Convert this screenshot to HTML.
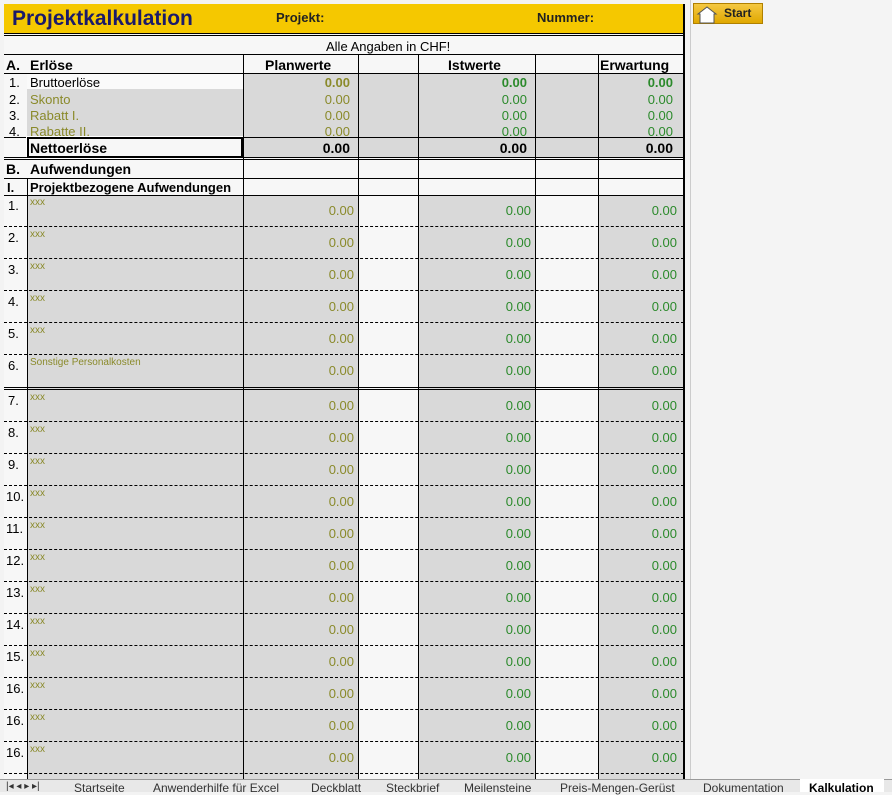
<!DOCTYPE html><html><head><meta charset="utf-8"><style>
body{margin:0;width:892px;height:792px;background:#f3f3f3;position:relative;overflow:hidden;font-family:"Liberation Sans",sans-serif;}
div,span{position:absolute;box-sizing:border-box}
.s{background:#d9d9d9}
.w{background:#f7f7f7}
.vl{width:1px;background:#000}
.hl{height:1px;background:#000;left:4px;width:680px}
.r{left:4px;width:680px;height:32px;border-bottom:1px dashed #000}
.r .n{left:4px;top:3px;font-size:13px;color:#000}
.r .x{left:26px;top:2px;font-size:10px;color:#8a8a2a}
.v{font-size:13px;text-align:right}
.r .v{top:8px}
.p{left:240px;width:110px;color:#8a8a2a}
.i{left:414px;width:113px;color:#2b8a2b}
.e{left:594px;width:79px;color:#2b8a2b}
.top .n{left:6px;font-size:13px}
.lab{left:30px;font-size:13px}
.tab{top:781px;font-size:12px;color:#333}
</style></head><body>
<!-- right pane -->
<div style="left:690px;top:0;width:202px;height:780px;background:#f4f4f4;border-left:1px solid #ccc"></div>
<div style="left:693px;top:3px;width:70px;height:21px;background:linear-gradient(#f5c842,#e0a800);border:1px solid #b08000;font-size:12px;font-weight:bold;color:#222;padding:2px 0 0 30px">Start</div>
<svg style="position:absolute;left:696px;top:4px" width="22" height="20"><path d="M2 10 L11 3 L20 10 L18 10 L18 19 L4 19 L4 10 Z" fill="#fff" stroke="#555" stroke-width="1"/></svg>
<!-- sheet -->
<div style="left:4px;top:4px;width:680px;height:776px;background:#f7f7f7"></div>
<div style="left:4px;top:4px;width:680px;height:29px;background:#f5c800"></div>
<div style="left:12px;top:7px;font-size:21px;font-weight:bold;color:#1a1a6a">Projektkalkulation</div>
<div style="left:276px;top:10px;font-size:13px;font-weight:bold;color:#222">Projekt:</div>
<div style="left:537px;top:10px;font-size:13px;font-weight:bold;color:#222">Nummer:</div>
<div class="hl" style="top:33px;height:1px"></div><div class="hl" style="top:35px"></div>
<div style="left:326px;top:39px;font-size:13px">Alle Angaben in CHF!</div>
<div class="hl" style="top:54px"></div>
<!-- gray blocks for Erlöse -->
<div class="w" style="left:27px;top:73px;width:216px;height:16px;background:#fafafa"></div>
<div class="s" style="left:27px;top:89px;width:216px;height:48px"></div>
<div class="s" style="left:243px;top:73px;width:440px;height:84px"></div>
<div style="left:6px;top:57px;font-size:14px;font-weight:bold">A.</div>
<div class="lab" style="top:57px;font-size:14px;font-weight:bold">Erlöse</div>
<div style="left:265px;top:57px;font-size:14px;font-weight:bold">Planwerte</div>
<div style="left:448px;top:57px;font-size:14px;font-weight:bold">Istwerte</div>
<div style="left:600px;top:57px;font-size:14px;font-weight:bold">Erwartung</div>
<div class="hl" style="top:73px"></div>
<div style="left:9px;top:75px;font-size:13px">1.</div><div class="lab" style="top:75px">Bruttoerlöse</div>
<div style="left:9px;top:92px;font-size:13px">2.</div><div class="lab" style="top:92px;color:#8a8a2a">Skonto</div>
<div style="left:9px;top:108px;font-size:13px">3.</div><div class="lab" style="top:108px;color:#8a8a2a">Rabatt I.</div>
<div style="left:9px;top:124px;font-size:13px">4.</div><div class="lab" style="top:124px;color:#8a8a2a">Rabatte II.</div>
<div class="v p" style="top:75px;font-weight:bold">0.00</div><div class="v i" style="top:75px;font-weight:bold">0.00</div><div class="v e" style="top:75px;font-weight:bold">0.00</div>
<div class="v p" style="top:92px">0.00</div><div class="v i" style="top:92px">0.00</div><div class="v e" style="top:92px">0.00</div>
<div class="v p" style="top:108px">0.00</div><div class="v i" style="top:108px">0.00</div><div class="v e" style="top:108px">0.00</div>
<div class="v p" style="top:124px">0.00</div><div class="v i" style="top:124px">0.00</div><div class="v e" style="top:124px">0.00</div>
<div class="hl" style="top:137px"></div>
<div style="left:27px;top:137px;width:216px;height:21px;border:2px solid #000;outline:1px solid #fff;background:#f7f7f7"></div>
<div class="lab" style="top:140px;font-size:14px;font-weight:bold">Nettoerlöse</div>
<div class="v p" style="top:140px;font-size:14px;font-weight:bold;color:#000">0.00</div>
<div class="v i" style="top:140px;font-size:14px;font-weight:bold;color:#000">0.00</div>
<div class="v e" style="top:140px;font-size:14px;font-weight:bold;color:#000">0.00</div>
<div class="hl" style="top:157px"></div><div class="hl" style="top:159px"></div>
<div style="left:6px;top:161px;font-size:14px;font-weight:bold">B.</div><div class="lab" style="top:161px;font-size:14px;font-weight:bold">Aufwendungen</div>
<div class="hl" style="top:178px"></div>
<div style="left:7px;top:180px;font-size:13px;font-weight:bold">I.</div><div class="lab" style="top:180px;font-weight:bold">Projektbezogene Aufwendungen</div>
<div class="hl" style="top:195px"></div>
<!-- data strips -->
<div class="s" style="left:27px;top:196px;width:216px;height:584px"></div>
<div class="s" style="left:243px;top:196px;width:115px;height:584px"></div>
<div class="s" style="left:418px;top:196px;width:117px;height:584px"></div>
<div class="s" style="left:598px;top:196px;width:85px;height:584px"></div>
<div class="r" style="top:195px"><span class="n">1.</span><span class="x">xxx</span><span class="v p">0.00</span><span class="v i">0.00</span><span class="v e">0.00</span></div>
<div class="r" style="top:227px"><span class="n">2.</span><span class="x">xxx</span><span class="v p">0.00</span><span class="v i">0.00</span><span class="v e">0.00</span></div>
<div class="r" style="top:259px"><span class="n">3.</span><span class="x">xxx</span><span class="v p">0.00</span><span class="v i">0.00</span><span class="v e">0.00</span></div>
<div class="r" style="top:291px"><span class="n">4.</span><span class="x">xxx</span><span class="v p">0.00</span><span class="v i">0.00</span><span class="v e">0.00</span></div>
<div class="r" style="top:323px"><span class="n">5.</span><span class="x">xxx</span><span class="v p">0.00</span><span class="v i">0.00</span><span class="v e">0.00</span></div>
<div class="r" style="top:355px;border-bottom:none"><span class="n">6.</span><span class="x">Sonstige Personalkosten</span><span class="v p">0.00</span><span class="v i">0.00</span><span class="v e">0.00</span></div>
<div class="hl" style="top:387px"></div><div class="hl" style="top:389px"></div>
<div class="r" style="top:390px"><span class="n">7.</span><span class="x">xxx</span><span class="v p">0.00</span><span class="v i">0.00</span><span class="v e">0.00</span></div>
<div class="r" style="top:422px"><span class="n">8.</span><span class="x">xxx</span><span class="v p">0.00</span><span class="v i">0.00</span><span class="v e">0.00</span></div>
<div class="r" style="top:454px"><span class="n">9.</span><span class="x">xxx</span><span class="v p">0.00</span><span class="v i">0.00</span><span class="v e">0.00</span></div>
<div class="r" style="top:486px"><span class="n" style="left:2px">10.</span><span class="x">xxx</span><span class="v p">0.00</span><span class="v i">0.00</span><span class="v e">0.00</span></div>
<div class="r" style="top:518px"><span class="n" style="left:2px">11.</span><span class="x">xxx</span><span class="v p">0.00</span><span class="v i">0.00</span><span class="v e">0.00</span></div>
<div class="r" style="top:550px"><span class="n" style="left:2px">12.</span><span class="x">xxx</span><span class="v p">0.00</span><span class="v i">0.00</span><span class="v e">0.00</span></div>
<div class="r" style="top:582px"><span class="n" style="left:2px">13.</span><span class="x">xxx</span><span class="v p">0.00</span><span class="v i">0.00</span><span class="v e">0.00</span></div>
<div class="r" style="top:614px"><span class="n" style="left:2px">14.</span><span class="x">xxx</span><span class="v p">0.00</span><span class="v i">0.00</span><span class="v e">0.00</span></div>
<div class="r" style="top:646px"><span class="n" style="left:2px">15.</span><span class="x">xxx</span><span class="v p">0.00</span><span class="v i">0.00</span><span class="v e">0.00</span></div>
<div class="r" style="top:678px"><span class="n" style="left:2px">16.</span><span class="x">xxx</span><span class="v p">0.00</span><span class="v i">0.00</span><span class="v e">0.00</span></div>
<div class="r" style="top:710px"><span class="n" style="left:2px">16.</span><span class="x">xxx</span><span class="v p">0.00</span><span class="v i">0.00</span><span class="v e">0.00</span></div>
<div class="r" style="top:742px"><span class="n" style="left:2px">16.</span><span class="x">xxx</span><span class="v p">0.00</span><span class="v i">0.00</span><span class="v e">0.00</span></div>
<!-- vertical lines -->
<div class="vl" style="left:27px;top:178px;height:602px"></div>
<div class="vl" style="left:243px;top:54px;height:726px"></div>
<div class="vl" style="left:358px;top:54px;height:726px"></div>
<div class="vl" style="left:418px;top:54px;height:726px"></div>
<div class="vl" style="left:535px;top:54px;height:726px"></div>
<div class="vl" style="left:598px;top:54px;height:726px"></div>
<div class="vl" style="left:683px;top:4px;height:776px;width:2px"></div>
<!-- tabs -->
<div style="left:0;top:779px;width:892px;height:13px;background:#e8e8e8;border-top:1px solid #999"></div>
<div class="tab" style="left:6px;font-size:10px">|◂ ◂ ▸ ▸|</div>
<div class="tab" style="left:74px">Startseite</div>
<div class="tab" style="left:153px">Anwenderhilfe für Excel</div>
<div class="tab" style="left:311px">Deckblatt</div>
<div class="tab" style="left:386px">Steckbrief</div>
<div class="tab" style="left:464px">Meilensteine</div>
<div class="tab" style="left:560px">Preis-Mengen-Gerüst</div>
<div class="tab" style="left:703px">Dokumentation</div>
<div style="left:800px;top:779px;width:84px;height:13px;background:#fff"></div>
<div class="tab" style="left:809px;font-weight:bold;color:#000">Kalkulation</div>
</body></html>
